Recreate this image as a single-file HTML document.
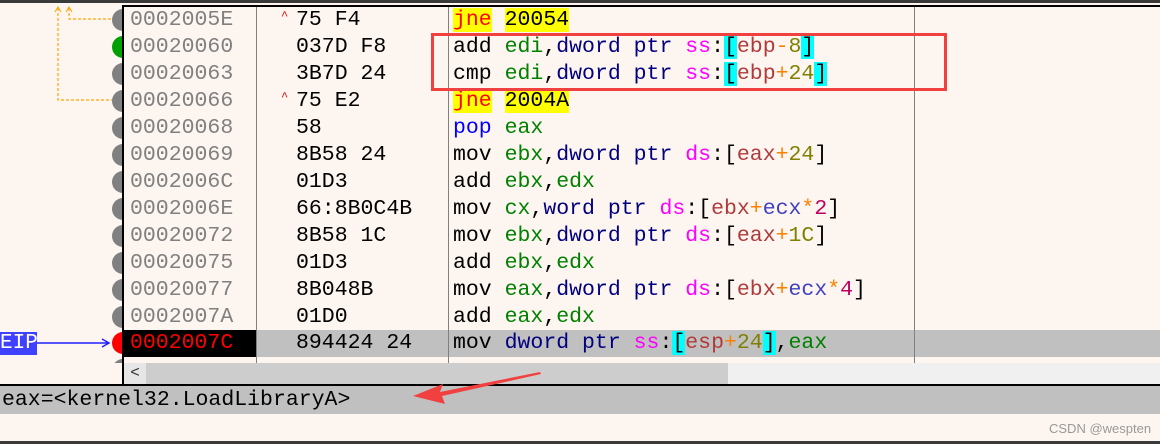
<!DOCTYPE html>
<html><head><meta charset="utf-8"><style>
*{margin:0;padding:0;box-sizing:border-box}
body{width:1160px;height:444px;background:#fdf6f0;position:relative;overflow:hidden;font-family:"Liberation Mono","DejaVu Sans Mono",monospace;font-size:21.5px}
.a{position:absolute}
.row{position:absolute;left:0;width:1160px;height:27px;line-height:27px;white-space:pre}
.ad{position:absolute;left:130px;color:#808080}
.by{position:absolute;left:296px;color:#000}
.ds{position:absolute;left:453px;color:#000}
.car{position:absolute;left:281px;color:#e00;font-size:12px;top:-4px}
.dot{position:absolute;left:112px;width:22px;height:22px;border-radius:50%;background:#808080}
.y{background:#ffff00}
.r{color:#008000}.n{color:#000080}.s{color:#ff00ff}.b{color:#b03a3a}.o{color:#ff8000}.v{color:#808000}.c{background:#00ffff;color:#000}.e{color:#4040c0}.m{color:#c00060}.j{color:#ff0000}.p{color:#0000ff}
</style></head><body>
<div class="a" style="left:0;top:0;width:1160px;height:3px;background:#3a3a3a"></div>
<div class="a" style="left:123px;top:5px;width:1037px;height:2px;background:#000"></div>

<div class="row" style="top:7px"><span class="ad">0002005E</span><span class="car">^</span><span class="by">75 F4</span><span class="ds"><span class="y j">jne</span> <span class="y">20054</span></span></div>
<div class="row" style="top:34px"><span class="ad">00020060</span><span class="by">037D F8</span><span class="ds">add <span class="r">edi</span>,<span class="n">dword ptr</span> <span class="s">ss</span>:<span class="c">[</span><span class="b">ebp</span><span class="o">-</span><span class="v">8</span><span class="c">]</span></span></div>
<div class="row" style="top:61px"><span class="ad">00020063</span><span class="by">3B7D 24</span><span class="ds">cmp <span class="r">edi</span>,<span class="n">dword ptr</span> <span class="s">ss</span>:<span class="c">[</span><span class="b">ebp</span><span class="o">+</span><span class="v">24</span><span class="c">]</span></span></div>
<div class="row" style="top:88px"><span class="ad">00020066</span><span class="car">^</span><span class="by">75 E2</span><span class="ds"><span class="y j">jne</span> <span class="y">2004A</span></span></div>
<div class="row" style="top:115px"><span class="ad">00020068</span><span class="by">58</span><span class="ds"><span class="p">pop</span> <span class="r">eax</span></span></div>
<div class="row" style="top:142px"><span class="ad">00020069</span><span class="by">8B58 24</span><span class="ds">mov <span class="r">ebx</span>,<span class="n">dword ptr</span> <span class="s">ds</span>:[<span class="b">eax</span><span class="o">+</span><span class="v">24</span>]</span></div>
<div class="row" style="top:169px"><span class="ad">0002006C</span><span class="by">01D3</span><span class="ds">add <span class="r">ebx</span>,<span class="r">edx</span></span></div>
<div class="row" style="top:196px"><span class="ad">0002006E</span><span class="by">66:8B0C4B</span><span class="ds">mov <span class="r">cx</span>,<span class="n">word ptr</span> <span class="s">ds</span>:[<span class="b">ebx</span><span class="o">+</span><span class="e">ecx</span><span class="o">*</span><span class="m">2</span>]</span></div>
<div class="row" style="top:223px"><span class="ad">00020072</span><span class="by">8B58 1C</span><span class="ds">mov <span class="r">ebx</span>,<span class="n">dword ptr</span> <span class="s">ds</span>:[<span class="b">eax</span><span class="o">+</span><span class="v">1C</span>]</span></div>
<div class="row" style="top:250px"><span class="ad">00020075</span><span class="by">01D3</span><span class="ds">add <span class="r">ebx</span>,<span class="r">edx</span></span></div>
<div class="row" style="top:277px"><span class="ad">00020077</span><span class="by">8B048B</span><span class="ds">mov <span class="r">eax</span>,<span class="n">dword ptr</span> <span class="s">ds</span>:[<span class="b">ebx</span><span class="o">+</span><span class="e">ecx</span><span class="o">*</span><span class="m">4</span>]</span></div>
<div class="row" style="top:304px"><span class="ad">0002007A</span><span class="by">01D0</span><span class="ds">add <span class="r">eax</span>,<span class="r">edx</span></span></div>
<div class="row" style="top:330px"><div class="a" style="left:256px;top:0;width:904px;height:27px;background:#c0c0c0"></div><div class="a" style="left:124px;top:0;width:132px;height:27px;background:#000"></div><span class="ad" style="color:#ff0000">0002007C</span><span class="by">894424 24</span><span class="ds">mov <span class="n">dword ptr</span> <span class="s">ss</span>:<span class="c">[</span><span class="b">esp</span><span class="o">+</span><span class="v">24</span><span class="c">]</span>,<span class="r">eax</span></span></div>

<!-- gutter dots (clipped) -->
<div class="a" style="left:0;top:7px;width:122px;height:356px;overflow:hidden">
<div class="dot" style="top:2px"></div>
<div class="dot" style="top:29px;background:#00a000"></div>
<div class="dot" style="top:56px"></div>
<div class="dot" style="top:83px"></div>
<div class="dot" style="top:110px"></div>
<div class="dot" style="top:137px"></div>
<div class="dot" style="top:164px"></div>
<div class="dot" style="top:191px"></div>
<div class="dot" style="top:218px"></div>
<div class="dot" style="top:245px"></div>
<div class="dot" style="top:272px"></div>
<div class="dot" style="top:299px"></div>
<div class="dot" style="top:325px;background:#ff0000"></div>
<div class="dot" style="top:352px"></div>
</div>

<!-- column lines -->
<div class="a" style="left:122px;top:5px;width:2px;height:380px;background:#000"></div>
<div class="a" style="left:256px;top:7px;width:1px;height:356px;background:#808080"></div>
<div class="a" style="left:448px;top:7px;width:1px;height:356px;background:#808080"></div>
<div class="a" style="left:914px;top:7px;width:1px;height:356px;background:#808080"></div>

<!-- jump lines -->
<svg class="a" style="left:0;top:0" width="123" height="360">
<path d="M58 8V100H112M69 8V19H112" stroke="#ffa500" stroke-width="1.2" stroke-dasharray="3,2" fill="none"/>
<path d="M55 12L58 7L61 12M66 12L69 7L72 12" stroke="#ffa500" stroke-width="1" fill="none"/>
<path d="M37 343H108M102 339L109 343L102 347" stroke="#2020ff" stroke-width="1.5" fill="none"/>
</svg>
<div class="a" style="left:0;top:332px;width:37px;height:23px;background:#4040ff;color:#fff;line-height:23px;font-size:21px">EIP</div>

<!-- scrollbar -->
<div class="a" style="left:124px;top:363px;width:1036px;height:21px;background:#f0f0f0"></div>
<div class="a" style="left:124px;top:363px;width:22px;height:21px;background:#e6e6e6;font-size:16px;line-height:21px;text-align:center;color:#333">&lt;</div>
<div class="a" style="left:146px;top:363px;width:582px;height:21px;background:#cdcdcd"></div>
<div class="a" style="left:0;top:384px;width:1160px;height:2px;background:#000"></div>
<div class="a" style="left:0;top:386px;width:1160px;height:28px;background:#c0c0c0;line-height:28px;padding-left:2px;white-space:pre">eax=&lt;kernel32.LoadLibraryA&gt;</div>
<div class="a" style="left:0;top:441px;width:1160px;height:3px;background:#3a3a3a"></div>
<div class="a" style="left:1049px;top:421px;font-family:'Liberation Sans',sans-serif;font-size:13px;color:#999">CSDN @wespten</div>

<!-- annotations -->
<div class="a" style="left:431px;top:33px;width:516px;height:58px;border:3px solid #f04040"></div>
<svg class="a" style="left:400px;top:365px" width="160" height="50">
<path d="M140 7L40 27L43 19L13 31L45 39L42 31L141 9Z" fill="#f04040"/>
</svg>
</body></html>
